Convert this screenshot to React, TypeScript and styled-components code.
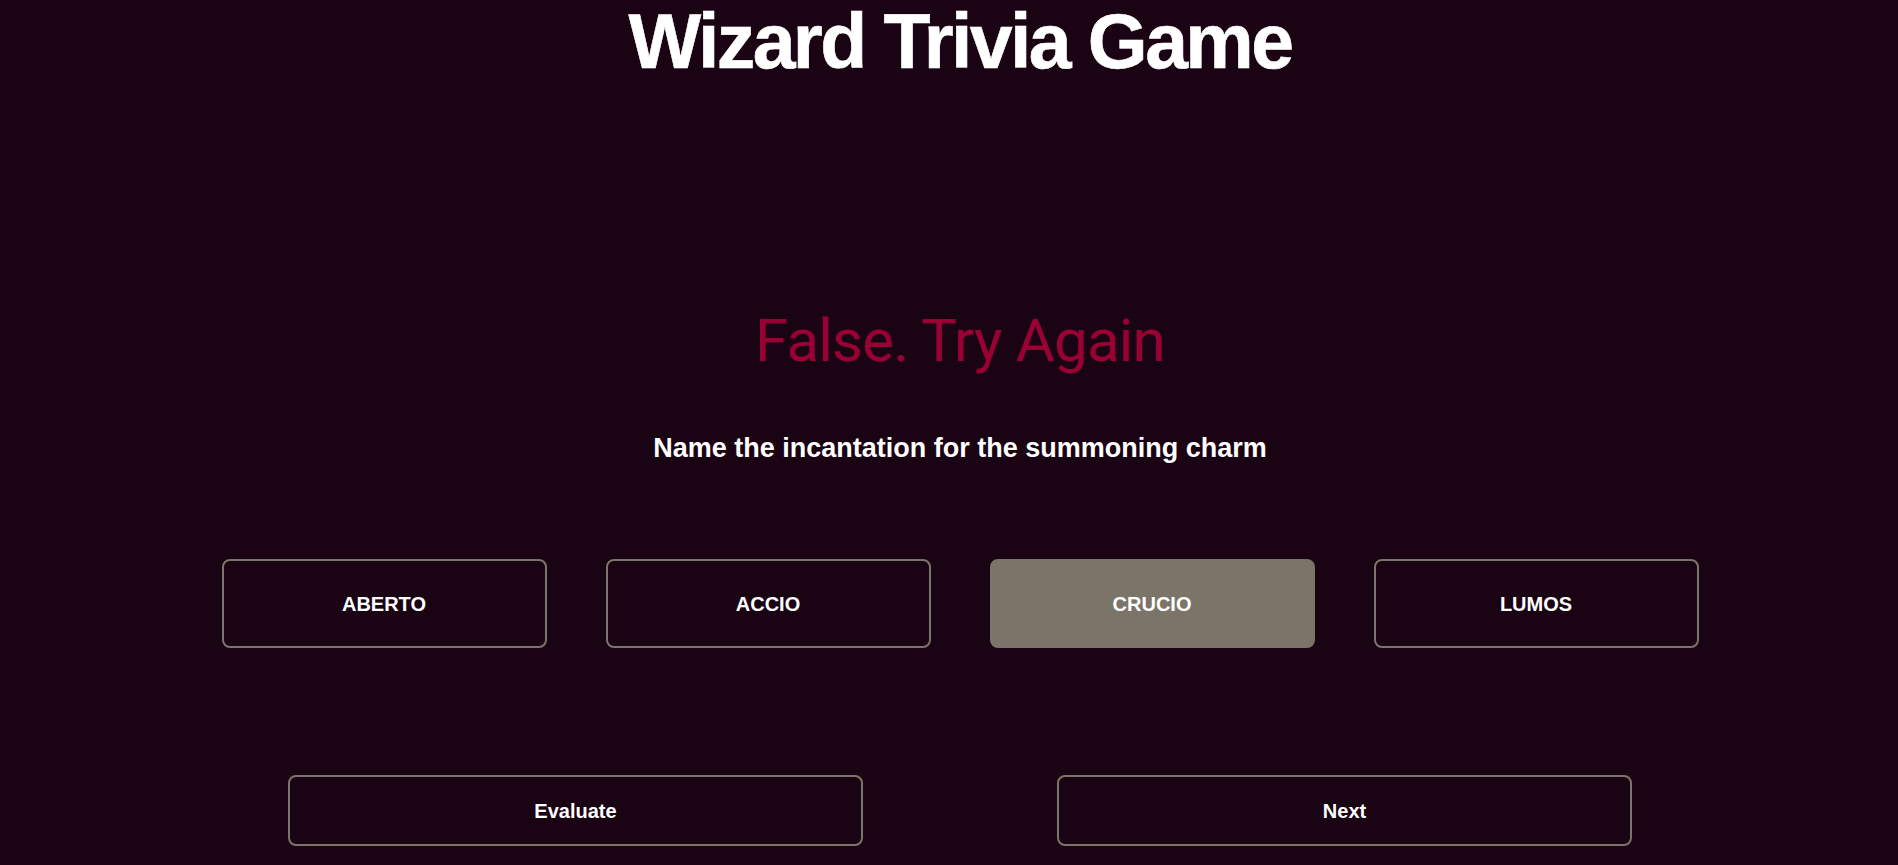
import React, { useState } from "react";
import styled, { createGlobalStyle } from "styled-components";

const GlobalStyle = createGlobalStyle`
  html, body {
    margin: 0;
    padding: 0;
    background: #1a0313;
  }
  body {
    font-family: "Liberation Sans", Arial, sans-serif;
    color: #ffffff;
  }
`;

const Page = styled.main`
  box-sizing: border-box;
  min-height: 865px;
  padding-left: 22px;
  display: flex;
  flex-direction: column;
  align-items: center;
  background: #1a0313;
`;

const Title = styled.h1`
  margin: 0;
  padding-top: 3px;
  font-size: 77px;
  line-height: 77px;
  font-weight: 700;
  letter-spacing: -2.6px;
  color: #ffffff;
  white-space: nowrap;
  -webkit-text-stroke: 0.6px #ffffff;
`;

const Verdict = styled.h2`
  margin: 231px 0 0;
  font-family: Roboto, "Liberation Sans", Arial, sans-serif;
  font-size: 60px;
  line-height: 60px;
  font-weight: 400;
  letter-spacing: -0.8px;
  color: #990033;
  white-space: nowrap;
`;

const Question = styled.p`
  margin: 64px 0 0;
  font-size: 27px;
  line-height: 27px;
  font-weight: 700;
  color: #ffffff;
  white-space: nowrap;
`;

const AnswerRow = styled.div`
  margin-top: 97px;
  display: grid;
  grid-template-columns: repeat(4, 325px);
  column-gap: 59px;
`;

const ActionRow = styled.div`
  margin-top: 127px;
  display: grid;
  grid-template-columns: repeat(2, 575px);
  column-gap: 194px;
`;

const BaseButton = styled.button`
  box-sizing: border-box;
  border: 2px solid #7b7468;
  border-radius: 8px;
  color: #ffffff;
  font-family: "Liberation Sans", Arial, sans-serif;
  font-weight: 700;
  font-size: 20px;
  cursor: pointer;
  display: flex;
  align-items: center;
  justify-content: center;
  padding: 0;
`;

const AnswerButton = styled(BaseButton)<{ $selected?: boolean }>`
  height: 89px;
  padding-top: 2px;
  background: ${(p) => (p.$selected ? "#7b7468" : "transparent")};
`;

const ActionButton = styled(BaseButton)`
  height: 71px;
  padding-top: 2px;
  background: transparent;
`;

const answers = ["ABERTO", "ACCIO", "CRUCIO", "LUMOS"];

export default function App() {
  const [selected, setSelected] = useState("CRUCIO");
  return (
    <>
      <GlobalStyle />
      <Page>
        <Title>Wizard Trivia Game</Title>
        <Verdict>False. Try Again</Verdict>
        <Question>Name the incantation for the summoning charm</Question>
        <AnswerRow>
          {answers.map((a) => (
            <AnswerButton key={a} $selected={a === selected} onClick={() => setSelected(a)}>
              {a}
            </AnswerButton>
          ))}
        </AnswerRow>
        <ActionRow>
          <ActionButton>Evaluate</ActionButton>
          <ActionButton>Next</ActionButton>
        </ActionRow>
      </Page>
    </>
  );
}
